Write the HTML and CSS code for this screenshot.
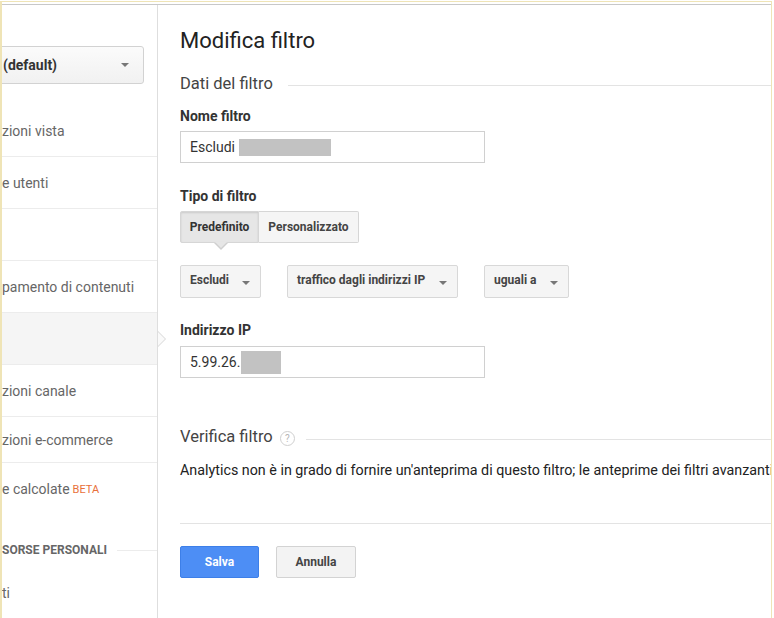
FILE: index.html
```html
<!DOCTYPE html>
<html lang="it">
<head>
<meta charset="utf-8">
<title>Modifica filtro</title>
<link rel="stylesheet" href="styles.css">
</head>
<body>
<div class="frame">
  <div class="topline"></div>
  <div class="layout">
    <aside class="sidebar">
      <div class="view-select"><span>(default)</span><i class="caret"></i></div>
      <ul class="nav">
        <li class="nav-item">zioni vista</li>
        <li class="nav-item">e utenti</li>
        <li class="nav-item"></li>
        <li class="nav-item">pamento di contenuti</li>
        <li class="nav-item active"></li>
        <li class="nav-item">zioni canale</li>
        <li class="nav-item short">zioni e-commerce</li>
        <li class="nav-item last">e calcolate <span class="beta">BETA</span></li>
      </ul>
      <div class="nav-section"><span>SORSE PERSONALI</span><span class="rule"></span></div>
      <div class="nav-item plain">ti</div>
    </aside>
    <main class="main">
      <h1 class="title">Modifica filtro</h1>
      <div class="section-head"><span>Dati del filtro</span><span class="rule"></span></div>
      <div class="label first">Nome filtro</div>
      <div class="input"><span>Escludi</span><span class="mask mask-name"></span></div>
      <div class="label">Tipo di filtro</div>
      <div class="toggle">
        <span class="tbtn on">Predefinito</span><span class="tbtn">Personalizzato</span>
      </div>
      <div class="selects">
        <span class="sel sel-1">Escludi<i class="caret"></i></span>
        <span class="sel sel-2">traffico dagli indirizzi IP<i class="caret"></i></span>
        <span class="sel sel-3">uguali a<i class="caret"></i></span>
      </div>
      <div class="label ip">Indirizzo IP</div>
      <div class="input"><span>5.99.26.</span><span class="mask mask-ip"></span></div>
      <div class="section-head verify"><span>Verifica filtro</span><span class="help">?</span><span class="rule"></span></div>
      <p class="note">Analytics non è in grado di fornire un'anteprima di questo filtro; le anteprime dei filtri avanzanti non sono disponibili.</p>
      <div class="divider"></div>
      <div class="actions">
        <span class="btn primary">Salva</span>
        <span class="btn">Annulla</span>
      </div>
    </main>
  </div>
</div>
</body>
</html>
```
FILE: styles.css
```css
html, body {
  margin: 0;
  padding: 0;
  background: #fff;
  overflow: hidden;
}
body {
  font-family: Roboto, "Liberation Sans", Arial, sans-serif;
  color: #222;
  width: 774px;
  height: 618px;
}
.frame {
  margin-top: 1px;
  width: 772px;
  height: 617px;
  border-top: 1px solid #efe4b6;
  border-left: 2px solid #efe4b6;
  border-right: 1px solid #efe4b6;
  padding-top: 2px;
  box-sizing: border-box;
  overflow: hidden;
}
.topline {
  height: 1px;
  background: #c8c8c8;
}
.layout {
  display: flex;
  height: 620px;
}
.sidebar {
  width: 155px;
  flex: none;
  border-right: 1px solid #dedede;
  position: relative;
}
.view-select {
  margin: 41px 13px 0 -12px;
  height: 36px;
  border: 1px solid #d2d2d2;
  border-radius: 3px;
  background: linear-gradient(#fbfbfb, #f1f1f1);
  display: flex;
  align-items: center;
  justify-content: space-between;
  padding: 0 14px 0 12px;
  font-weight: 700;
  font-size: 14px;
  color: #333;
  overflow: hidden;
}
.caret {
  display: inline-block;
  width: 0;
  height: 0;
  border-left: 4px solid transparent;
  border-right: 4px solid transparent;
  border-top: 4px solid #777;
}
.nav {
  list-style: none;
  margin: 21px 0 0;
  padding: 0;
}
.nav-item {
  height: 51px;
  border-bottom: 1px solid #ececec;
  display: flex;
  align-items: center;
  font-size: 14px;
  color: #666;
  white-space: nowrap;
  position: relative;
}
.nav-item.active {
  background: #f5f5f5;
}
.nav-item.active::after {
  content: "";
  position: absolute;
  right: -9px;
  top: 18px;
  width: 0;
  height: 0;
  border-top: 8px solid transparent;
  border-bottom: 8px solid transparent;
  border-left: 8px solid #d6d6d6;
}
.nav-item.active::before {
  content: "";
  position: absolute;
  right: -8px;
  top: 19px;
  width: 0;
  height: 0;
  border-top: 7px solid transparent;
  border-bottom: 7px solid transparent;
  border-left: 7px solid #fafafa;
  z-index: 1;
}
.nav-item.short {
  padding-top: 1px;
  box-sizing: content-box;
  height: 44px;
}
.nav-item.last {
  border-bottom: none;
  height: 52px;
}
.beta {
  color: #e8703a;
  font-size: 11px;
  margin-left: 3px;
  padding-top: 1px;
}
.nav-section {
  margin-top: 28px;
  display: flex;
  align-items: center;
  font-size: 12px;
  font-weight: 700;
  color: #666;
  white-space: nowrap;
}
.nav-section .rule {
  flex: 1;
  height: 1px;
  background: #ececec;
  margin-left: 10px;
  margin-top: 1px;
}
.nav-item.plain {
  border-bottom: none;
  height: 34px;
  margin-top: 19px;
}
.main {
  flex: 1;
  padding: 24px 0 0 22px;
  min-width: 0;
  overflow: hidden;
}
.title {
  margin: 0;
  font-size: 22px;
  font-weight: 400;
  line-height: 24px;
  color: #222;
}
.section-head {
  margin-top: 21px;
  display: flex;
  align-items: center;
  font-size: 16.5px;
  line-height: 20px;
  color: #444;
  white-space: nowrap;
}
.section-head .rule {
  flex: 1;
  height: 1px;
  background: #e3e3e3;
  margin-left: 15px;
  margin-top: 3px;
}
.section-head.verify {
  margin-top: 49px;
}
.section-head.verify .rule {
  margin-left: 11px;
  margin-top: 4px;
}
.help {
  width: 15px;
  height: 15px;
  border: 1px solid #cfcfcf;
  border-radius: 50%;
  box-sizing: border-box;
  font-size: 10px;
  line-height: 13px;
  text-align: center;
  color: #b5b5b5;
  margin-left: 7px;
  margin-top: 2px;
}
.label {
  margin-top: 24px;
  font-size: 14px;
  font-weight: 700;
  line-height: 18px;
  color: #333;
}
.label.first {
  margin-top: 13px;
}
.label.ip {
  margin-top: 23px;
}
.input {
  margin-top: 6px;
  width: 305px;
  height: 32px;
  box-sizing: border-box;
  border: 1px solid #d0d0d0;
  display: flex;
  align-items: center;
  padding-left: 9px;
  font-size: 14px;
  color: #333;
}
.label.ip + .input {
  margin-top: 7px;
}
.mask {
  display: inline-block;
  background: #c2c2c2;
}
.mask-name {
  width: 92px;
  height: 17px;
  margin-left: 4px;
}
.mask-ip {
  width: 40px;
  height: 23px;
  margin-left: 1px;
}
.toggle {
  margin-top: 6px;
  display: flex;
  height: 32px;
}
.tbtn {
  display: flex;
  align-items: center;
  justify-content: center;
  border: 1px solid #d6d6d6;
  background: #f5f5f5;
  font-size: 12px;
  font-weight: 700;
  color: #444;
  box-sizing: border-box;
  height: 32px;
  position: relative;
}
.tbtn.on {
  width: 79px;
  background: #e6e6e6;
  border-radius: 2px 0 0 2px;
  box-shadow: inset 0 1px 2px rgba(0,0,0,0.12);
  color: #333;
}
.tbtn.on::after {
  content: "";
  position: absolute;
  left: 33px;
  bottom: -8px;
  width: 0;
  height: 0;
  border-left: 7px solid transparent;
  border-right: 7px solid transparent;
  border-top: 7px solid #cfcfcf;
}
.tbtn.on::before {
  content: "";
  position: absolute;
  left: 34px;
  bottom: -6px;
  width: 0;
  height: 0;
  border-left: 6px solid transparent;
  border-right: 6px solid transparent;
  border-top: 6px solid #e6e6e6;
  z-index: 1;
}
.tbtn:not(.on) {
  width: 100px;
  border-left: none;
  border-radius: 0 2px 2px 0;
}
.selects {
  margin-top: 22px;
  display: flex;
  gap: 26px;
  height: 33px;
}
.sel {
  display: flex;
  align-items: center;
  justify-content: space-between;
  box-sizing: border-box;
  height: 33px;
  border: 1px solid #d8d8d8;
  border-radius: 2px;
  background: #f5f5f5;
  font-size: 12px;
  font-weight: 700;
  color: #444;
  padding: 0 10px 4px 9px;
}
.sel .caret {
  margin-top: 7px;
}
.sel-1 { width: 81px; }
.sel-2 { width: 171px; }
.sel-3 { width: 85px; }
.note {
  margin: 13px 0 0;
  font-size: 14.3px;
  line-height: 20px;
  color: #222;
  white-space: nowrap;
}
.divider {
  margin-top: 43px;
  height: 1px;
  background: #e3e3e3;
}
.actions {
  margin-top: 22px;
  display: flex;
  gap: 17px;
}
.btn {
  display: flex;
  align-items: center;
  justify-content: center;
  height: 32px;
  width: 80px;
  box-sizing: border-box;
  border: 1px solid #d3d3d3;
  border-radius: 2px;
  background: #f3f3f3;
  font-size: 12px;
  font-weight: 700;
  color: #444;
}
.btn.primary {
  width: 79px;
  background: #4d8ef5;
  border-color: #3d7fe8;
  color: #fff;
}
```
